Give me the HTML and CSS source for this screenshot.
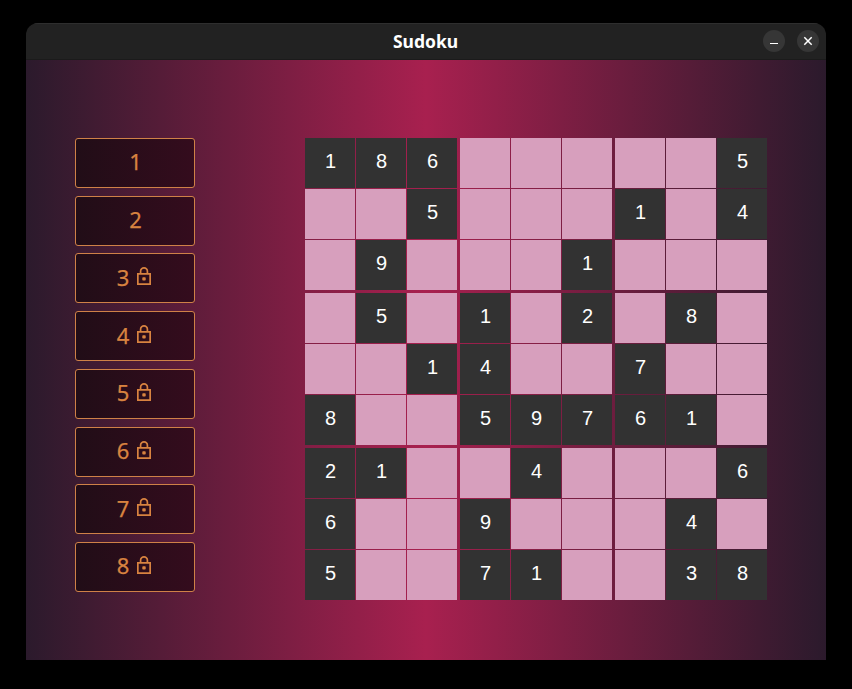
FILE: index.html
```html
<!DOCTYPE html>
<html lang="en">
<head>
<meta charset="utf-8">
<title>Sudoku</title>
<link rel="stylesheet" href="styles.css">
</head>
<body>
<div class="window">
  <header class="titlebar">
    <h1 class="title">Sudoku</h1>
    <div class="controls">
      <button class="control" aria-label="Minimize"><svg width="22" height="22" viewBox="0 0 22 22"><path d="M7 13.5H15" stroke-width="1.2"/></svg></button>
      <button class="control" aria-label="Close"><svg width="22" height="22" viewBox="0 0 22 22"><path d="M7.3 7.3L14.7 14.7M14.7 7.3L7.3 14.7"/></svg></button>
    </div>
  </header>
  <main class="game">
    <nav class="levels" id="levels"></nav>
    <div class="board" id="board"></div>
  </main>
</div>
<script src="script.js"></script>
</body>
</html>
```
FILE: styles.css
```css
* {
  box-sizing: border-box;
}

body {
  margin: 0;
  padding: 23px 26px 29px;
  height: 689px;
  background: #000;
  overflow: hidden;
}

.window {
  height: 637px;
  border-radius: 12px 12px 0 0;
  overflow: hidden;
}

.titlebar {
  display: grid;
  grid-template-columns: 1fr auto 1fr;
  align-items: center;
  height: 37px;
  padding-right: 7px;
  background: #222;
  border-top: 1px solid #2e2e2e;
  border-bottom: 1px solid #1b1b1b;
}

.title {
  grid-column: 2;
  margin: 0;
  padding-left: 6px;
  color: #fff;
  font: bold 17.5px/35px "Noto Sans", sans-serif;
}

.controls {
  display: flex;
  justify-content: flex-end;
  gap: 12px;
  margin-top: -1px;
}

.control {
  width: 22px;
  height: 22px;
  padding: 0;
  border: 0;
  border-radius: 50%;
  background: #363636;
}

.control svg {
  display: block;
  fill: none;
  stroke: #fff;
  stroke-width: 1.5;
}

.game {
  display: flex;
  justify-content: space-between;
  height: 600px;
  padding: 78px 59px 60px 49px;
  background: linear-gradient(90deg, #2b1a2c, #a8204f 50%, #2b1a2c);
}

.levels {
  display: flex;
  flex-direction: column;
  justify-content: space-between;
  width: 120px;
  height: 454px;
}

.level {
  display: flex;
  align-items: center;
  justify-content: center;
  gap: 8px;
  height: 50px;
  padding: 0 0 4px 1px;
  border: 1px solid #cf8147;
  border-radius: 3px;
  background: linear-gradient(90deg, #210d17, #340c1d);
  color: #d88340;
  font: 22px/30px "Noto Sans", sans-serif;
  -webkit-text-stroke: 0.25px #d88340;
}

.locked {
  padding: 0 2px 3px 0;
}

.lock {
  width: 14px;
  height: 18px;
  margin-bottom: 1px;
  fill: none;
  stroke: currentColor;
  stroke-width: 1.7;
}

.lock .keyhole {
  fill: currentColor;
  stroke: none;
}

.board,
.block {
  display: grid;
  grid-template-columns: repeat(3, auto);
}

.board {
  gap: 3px;
  align-content: start;
}

.block {
  gap: 1px;
}

.cell {
  width: 50px;
  height: 50px;
  padding-left: 1px;
  background: #d79fbd;
  color: #fff;
  font: 20px/47px "Liberation Sans", sans-serif;
  text-align: center;
}

.given {
  background: #323232;
}
```
FILE: script.js
```js
const rows = [
  '186.....5',
  '..5...1.4',
  '.9...1...',
  '.5.1.2.8.',
  '..14..7..',
  '8..59761.',
  '21..4...6',
  '6..9...4.',
  '5..71..38'
];
const unlocked = 2;
const lock = '<svg class="lock" viewBox="0 0 14 18"><path d="M.85 6.85H13.15V17.15H.85ZM3.6 7V4.3A3.4 3.4 0 0 1 10.4 4.3V7"/><rect class="keyhole" x="5.3" y="10.2" width="3.4" height="3.4" rx=".8"/></svg>';

const levels = document.getElementById('levels');
for (let n = 1; n <= 8; n++) {
  const button = document.createElement('button');
  button.className = n > unlocked ? 'level locked' : 'level';
  button.innerHTML = `<span>${n}</span>${n > unlocked ? lock : ''}`;
  levels.append(button);
}

const board = document.getElementById('board');
for (let b = 0; b < 9; b++) {
  const block = document.createElement('div');
  block.className = 'block';
  for (let i = 0; i < 9; i++) {
    const row = Math.floor(b / 3) * 3 + Math.floor(i / 3);
    const value = rows[row][(b % 3) * 3 + i % 3];
    const cell = document.createElement('div');
    cell.className = value === '.' ? 'cell' : 'cell given';
    cell.textContent = value === '.' ? '' : value;
    block.append(cell);
  }
  board.append(block);
}
```
